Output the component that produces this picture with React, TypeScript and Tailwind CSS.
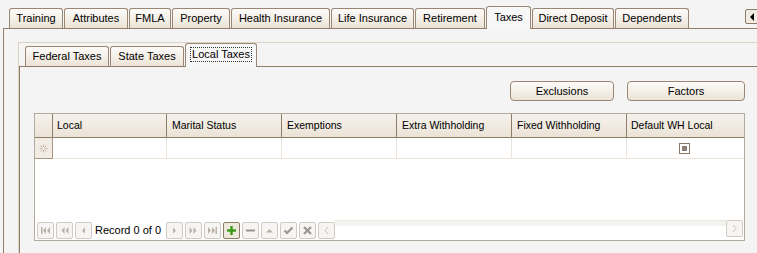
import React from 'react';

const outerTabs = [
  { label: 'Training', w: 'w-[54px]' },
  { label: 'Attributes', w: 'w-[64px]' },
  { label: 'FMLA', w: 'w-[42px]' },
  { label: 'Property', w: 'w-[58px]' },
  { label: 'Health Insurance', w: 'w-[99px]' },
  { label: 'Life Insurance', w: 'w-[83px]' },
  { label: 'Retirement', w: 'w-[70px]' },
  { label: 'Taxes', w: 'w-[45px]', selected: true },
  { label: 'Direct Deposit', w: 'w-[82px]' },
  { label: 'Dependents', w: 'w-[74px]' },
];

const innerTabs = [
  { label: 'Federal Taxes', w: 'w-[84px]' },
  { label: 'State Taxes', w: 'w-[74px]' },
  { label: 'Local Taxes', w: 'w-[72px]', selected: true },
];

function Tab({ label, w, selected, tall }: { label: string; w: string; selected?: boolean; tall: string }) {
  if (selected) {
    return (
      <div
        className={`${w} ${tall} -mb-px relative z-10 rounded-t-[3px] border border-b-0 border-[#9a8672] bg-[#f7f7f7] flex items-start justify-center pt-[4px] text-[11px] leading-[13px] text-black`}
      >
        {label === 'Local Taxes' ? (
          <span className="outline outline-1 outline-dotted outline-[#333] px-[1px]">{label}</span>
        ) : (
          label
        )}
      </div>
    );
  }
  return (
    <div
      className={`${w} h-[20px] rounded-t-[3px] border border-b-0 border-[#9a8672] bg-linear-to-b from-[#fdfcfa] to-[#ebe3d6] flex items-center justify-center text-[11px] leading-[13px] text-black`}
    >
      {label}
    </div>
  );
}

function NavBtn({ children, active }: { children: React.ReactNode; active?: boolean }) {
  return (
    <div
      className={`w-[17px] h-[17px] shrink-0 rounded-[2px] border flex items-center justify-center ${
        active ? 'border-[#8f7b66] bg-[#efe8dd]' : 'border-[#d2cbc3] bg-[#f6f5f3]'
      }`}
    >
      <svg width="15" height="15" viewBox="0 0 15 15">
        {children}
      </svg>
    </div>
  );
}

const ic = '#b9b1a8';
const icd = '#9c9690';

export default function App() {
  return (
    <div className="w-[757px] h-[253px] bg-[#f4f4f4] overflow-hidden font-['Liberation_Sans',Arial,sans-serif] text-[11px] text-black flex flex-col">
      {/* Outer tab strip */}
      <div className="h-[28px] shrink-0 flex items-end pl-[9px] gap-[1px]">
        {outerTabs.map((t) => (
          <Tab key={t.label} label={t.label} w={t.w} selected={t.selected} tall="h-[23px]" />
        ))}
        <div className="flex-1" />
        <div className="self-start mt-[9px] mr-[-6px] w-[18px] h-[15px] rounded-[2px] border border-[#8f7b66] bg-[#f0ebe3] flex items-center pl-[3px]">
          <svg width="6" height="8" viewBox="0 0 6 8">
            <path d="M5 0 L1 4 L5 8Z" fill="#000" />
          </svg>
        </div>
      </div>

      {/* Outer panel */}
      <div className="ml-[3px] flex-1 border-l border-t border-[#937e69] pl-[14px] pt-[13px] relative">
        {/* Group box */}
        <div className="border-l border-t border-[#ddd3c5] h-full flex flex-col">
          <div className="h-[23px] shrink-0 flex items-end pl-[6px] gap-[1px]">
            {innerTabs.map((t) => (
              <Tab key={t.label} label={t.label} w={t.w} selected={t.selected} tall="h-[24px]" />
            ))}
          </div>
          {/* Inner tab panel */}
          <div className="flex-1 border-l border-t border-[#8f7b66] pl-[14px] pt-[14px]">
            <div className="w-[711px] flex justify-end gap-[13px] h-[20px]">
              <button className="w-[104px] h-[20px] rounded-[4px] border border-[#9a8672] bg-linear-to-b from-[#fdfcfa] to-[#ebe3d6] text-[11px] leading-[13px] text-black">
                Exclusions
              </button>
              <button className="w-[118px] h-[20px] rounded-[4px] border border-[#9a8672] bg-linear-to-b from-[#fdfcfa] to-[#ebe3d6] text-[11px] leading-[13px] text-black">
                Factors
              </button>
            </div>

            {/* Grid */}
            <div className="mt-[12px] w-[711px] h-[128px] border border-[#b2a99f] bg-white flex flex-col">
              {/* header */}
              <div className="h-[24px] shrink-0 flex border-b border-[#8f7d6b] bg-linear-to-b from-[#f6f2ec] to-[#ebe3d6] text-[10.5px] leading-[13px]">
                <div className="w-[18px] shrink-0 border-r border-[#8f7d6b] rounded-tl-[4px]" />
                <div className="w-[114px] shrink-0 border-r border-[#8f7d6b] flex items-center pl-[4px]">Local</div>
                <div className="w-[115px] shrink-0 border-r border-[#8f7d6b] flex items-center pl-[5px]">Marital Status</div>
                <div className="w-[115px] shrink-0 border-r border-[#8f7d6b] flex items-center pl-[5px]">Exemptions</div>
                <div className="w-[115px] shrink-0 border-r border-[#8f7d6b] flex items-center pl-[5px]">Extra Withholding</div>
                <div className="w-[115px] shrink-0 border-r border-[#8f7d6b] flex items-center pl-[5px]">Fixed Withholding</div>
                <div className="flex-1 flex items-center pl-[4px] rounded-tr-[4px]">Default WH Local</div>
              </div>
              {/* data row */}
              <div className="h-[21px] shrink-0 flex border-b border-[#ebe4da]">
                <div className="w-[18px] shrink-0 border-r border-b border-[#a89684] bg-[#f1ece4] -mb-px flex items-center justify-center">
                  <svg width="9" height="9" viewBox="0 0 9 9">
                    <g stroke="#c4b4a2" strokeWidth="1">
                      <path d="M4.5 0.5 V8.5 M0.5 4.5 H8.5 M1.7 1.7 L7.3 7.3 M7.3 1.7 L1.7 7.3" />
                    </g>
                    <circle cx="4.5" cy="4.5" r="1.3" fill="#fff" />
                  </svg>
                </div>
                <div className="w-[114px] shrink-0 border-r border-[#ebe4da]" />
                <div className="w-[115px] shrink-0 border-r border-[#ebe4da]" />
                <div className="w-[115px] shrink-0 border-r border-[#ebe4da]" />
                <div className="w-[115px] shrink-0 border-r border-[#ebe4da]" />
                <div className="w-[115px] shrink-0 border-r border-[#ebe4da]" />
                <div className="flex-1 flex items-center justify-center pr-[2px]">
                  <div className="w-[11px] h-[11px] border border-[#8a7866] bg-white flex items-center justify-center">
                    <div className="w-[5px] h-[5px] bg-[#8e8078]" />
                  </div>
                </div>
              </div>
              <div className="flex-1" />
              {/* navigator */}
              <div className="h-[20px] shrink-0 flex items-start">
                <div className="flex items-center gap-[2px] pl-[2px] pt-[1px] h-full bg-white">
                  <NavBtn>
                    <rect x="3" y="4" width="1.5" height="7" fill={ic} />
                    <path d="M8 4 L5 7.5 L8 11Z M12 4 L9 7.5 L12 11Z" fill={ic} />
                  </NavBtn>
                  <NavBtn>
                    <path d="M7.5 4 L4.5 7.5 L7.5 11Z M11.5 4 L8.5 7.5 L11.5 11Z" fill={ic} />
                  </NavBtn>
                  <NavBtn>
                    <path d="M9 4.5 L6 7.5 L9 10.5Z" fill={ic} />
                  </NavBtn>
                  <span className="px-[1px] mr-[2px] text-[11px] leading-[13px] whitespace-nowrap">Record 0 of 0</span>
                  <NavBtn>
                    <path d="M6 4.5 L9 7.5 L6 10.5Z" fill={ic} />
                  </NavBtn>
                  <NavBtn>
                    <path d="M3.5 4 L6.5 7.5 L3.5 11Z M7.5 4 L10.5 7.5 L7.5 11Z" fill={ic} />
                  </NavBtn>
                  <NavBtn>
                    <path d="M3 4 L6 7.5 L3 11Z M7 4 L10 7.5 L7 11Z" fill={ic} />
                    <rect x="10.5" y="4" width="1.5" height="7" fill={ic} />
                  </NavBtn>
                  <NavBtn active>
                    <rect x="3" y="6.3" width="9" height="2.4" fill="#3a9a12" />
                    <rect x="6.3" y="3" width="2.4" height="9" fill="#3a9a12" />
                  </NavBtn>
                  <NavBtn>
                    <rect x="3" y="6.5" width="9" height="2" fill={icd} />
                  </NavBtn>
                  <NavBtn>
                    <path d="M4 9.5 L7.5 6 L11 9.5Z" fill={ic} />
                  </NavBtn>
                  <NavBtn>
                    <path d="M3.5 7.5 L6 10 L11.5 4.5" stroke={icd} strokeWidth="2.2" fill="none" />
                  </NavBtn>
                  <NavBtn>
                    <path d="M4 4 L11 11 M11 4 L4 11" stroke={icd} strokeWidth="2.2" fill="none" />
                  </NavBtn>
                  <NavBtn>
                    <path d="M9 4 L6 7.5 L9 11" stroke="#cbc1b7" strokeWidth="1" fill="none" />
                  </NavBtn>
                </div>
                {/* scroll track */}
                <div className="flex-1 h-full flex flex-col">
                  <div className="h-[1px] bg-[#efe6da]" />
                  <div className="h-[5px] bg-[#f3f3f2]" />
                  <div className="flex-1 bg-white" />
                </div>
                <div className="mr-[1px]">
                  <NavBtn>
                    <path d="M6 4 L9 7.5 L6 11" stroke="#cbc1b7" strokeWidth="1" fill="none" />
                  </NavBtn>
                </div>
              </div>
            </div>
          </div>
        </div>
      </div>
    </div>
  );
}
